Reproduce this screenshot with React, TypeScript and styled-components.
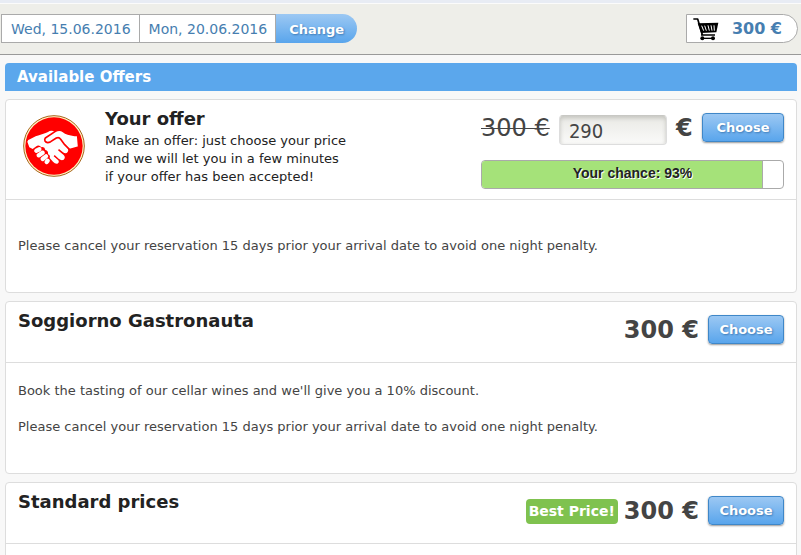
import React from "react";
import styled, { createGlobalStyle } from "styled-components";

const GlobalStyle = createGlobalStyle`
  * { box-sizing: border-box; }
  body {
    margin: 0;
    background: #f8f8f8;
    color: #444;
    font-family: "DejaVu Sans", Verdana, sans-serif;
    font-size: 13px;
    line-height: 18px;
  }
  h1, h2, p { margin: 0; }
  button, input { font-family: inherit; }
`;

const Page = styled.div`
  min-height: 100vh;
`;

const TopBar = styled.header`
  display: flex;
  justify-content: space-between;
  align-items: flex-start;
  padding: 10px 3px 11px 1px;
  background: #eeeee9;
  border-bottom: 1px solid #999;
`;

const TopStrip = styled.div`
  height: 4px;
  background: #e8ecf4;
  border-bottom: 1px solid #fbfbfb;
`;

const DateGroup = styled.div`
  display: flex;
`;

const DateButton = styled.button`
  height: 29px;
  padding: 0 8px 0 9px;
  border: 1px solid #aaa;
  background: #fff;
  color: #467eb0;
  font-size: 14px;
  line-height: 26px;
  & + & { border-left: 0; }
`;

const ChangeButton = styled.button`
  height: 29px;
  padding: 2px 13px 0;
  border: 0;
  border-radius: 0 15px 15px 0;
  background: linear-gradient(#9cc8f3, #59a5ec);
  color: #fff;
  font-size: 13px;
  font-weight: bold;
  text-shadow: 1px 1px 2px #3b78b4;
`;

const Cart = styled.a`
  display: flex;
  align-items: center;
  justify-content: space-between;
  width: 112px;
  height: 29px;
  padding: 0 15px 0 6px;
  border: 1px solid #aaa;
  border-radius: 0 15px 15px 0;
  background: #fff;
  color: #467eb0;
  font-size: 16px;
  font-weight: bold;
  text-decoration: none;
`;

const Main = styled.main`
  display: flex;
  flex-direction: column;
  gap: 8px;
  padding: 8px 4px 8px 5px;
`;

const Banner = styled.h1`
  padding: 0 12px;
  border-radius: 4px 4px 0 0;
  background: #5ba7ec;
  color: #fff;
  font-size: 15px;
  line-height: 28px;
`;

const Card = styled.section`
  border: 1px solid #ddd;
  border-radius: 4px;
  background: #fff;
`;

const CardHead = styled.div<{ $tall?: boolean }>`
  display: flex;
  justify-content: space-between;
  min-height: ${(p) => (p.$tall ? 100 : 61)}px;
  padding: ${(p) => (p.$tall ? "7px 12px 0 17px" : "7px 12px 0")};
  border-bottom: 1px solid #ddd;
`;

const CardBody = styled.div<{ $spacious?: boolean }>`
  display: flex;
  flex-direction: column;
  gap: 18px;
  padding: ${(p) => (p.$spacious ? 37 : 19)}px 12px 37px;
`;

const Title = styled.h2`
  color: #222;
  font-size: 18px;
  line-height: 24px;
`;

const Intro = styled.div`
  display: flex;
  gap: 20px;
  color: #222;
  svg { margin-top: 8px; }
`;

const IntroText = styled.p`
  width: 245px;
  padding-top: 1px;
`;

const Bidding = styled.div`
  display: flex;
  flex-direction: column;
  gap: 16px;
  width: 303px;
  padding-top: 6px;
`;

const Row = styled.div`
  display: flex;
  justify-content: space-between;
  height: 31px;
`;

const Actions = styled.div`
  display: flex;
  align-items: flex-start;
  gap: 9px;
  padding-top: 6px;
`;

const Price = styled.strong`
  font-size: 24px;
  line-height: 30px;
`;

const OldPrice = styled.s`
  font-size: 24px;
  line-height: 30px;
  text-decoration-thickness: 1px;
`;

const BidInput = styled.input`
  width: 108px;
  height: 30px;
  margin-top: 2px;
  padding: 2px 9px 0;
  border: 1px solid #ddd;
  border-top-color: #c8c8c4;
  border-radius: 4px;
  background: linear-gradient(#e9e9e5, #fafaf9);
  box-shadow: inset 0 2px 4px #c4c4be;
  color: #444;
  font-family: "DejaVu Sans Condensed", "Noto Sans", sans-serif;
  font-size: 20px;
`;

const ChooseButton = styled.button<{ $wide?: boolean }>`
  width: ${(p) => (p.$wide ? 82 : 76)}px;
  height: 29px;
  padding: 0;
  border: 1px solid #3f87c8;
  border-radius: 4px;
  background: linear-gradient(#9cc8f3, #59a5ec);
  box-shadow: 0 1px 2px #999;
  color: #fff;
  font-size: 13px;
  font-weight: bold;
  text-shadow: 1px 1px 2px #3b78b4;
`;

const Chance = styled.div`
  display: grid;
  height: 29px;
  border: 1px solid #aaa;
  border-radius: 4px;
  overflow: hidden;
  > * { grid-area: 1 / 1; }
`;

const ChanceFill = styled.div`
  box-sizing: content-box;
  border-right: 1px solid #aaa;
  background: #a5e279;
`;

const ChanceLabel = styled.span`
  color: #222;
  font: bold 14px/24px "Liberation Sans", Arial, sans-serif;
  text-align: center;
  text-shadow: 1px 1px 0 #fff;
`;

const Badge = styled.span`
  margin-top: 3px;
  padding: 0 3px;
  border-radius: 4px;
  background: #7fc24f;
  color: #fff;
  font-size: 14px;
  font-weight: bold;
  line-height: 25px;
`;

const PriceGroup = styled.div`
  display: flex;
  align-items: flex-start;
  gap: 6px;
`;

function Handshake() {
  return (
    <svg width="62" height="62" viewBox="24 30 186 186" aria-hidden="true">
      <circle cx="117" cy="123" r="91" fill="#fff3c4" stroke="#a8641c" strokeWidth="3" />
      <circle cx="117" cy="123" r="86" fill="#f00" />
      <path
        fill="#fff"
        d="M37 110 Q38 104 46 102 L62 94 L72 91 Q96 83 104 78 Q112 75 119 80 L127 86 L150 121 Q164 132 158 141 Q153 148 144 142 L132 132 L129 136 L146 150 Q153 158 146 164 Q139 168 131 161 L119 150 L116 154 L130 166 Q134 173 127 176 Q120 177 114 170 L104 159 Q107 151 99 148 Q101 137 91 135 Q89 124 79 127 Q72 117 62 125 L53 132 L43 127 Z"
      />
      <path
        fill="#fff"
        stroke="#f00"
        strokeWidth="5"
        strokeLinejoin="round"
        d="M91 99 L121 79 Q134 72 145 80 Q156 89 179 91 L188 91 L191 126 L164 134 L149 119 L137 103 Q132 95 124 99 L107 110 Q95 116 90 108 Q88 103 91 99 Z"
      />
      <g stroke="#fff" strokeWidth="13" strokeLinecap="round">
        <path d="M64 137 L73 133" />
        <path d="M71 151 L83 143" />
        <path d="M83 162 L93 154" />
        <path d="M95 171 L98 167" />
      </g>
    </svg>
  );
}

function CartIcon() {
  return (
    <svg width="26" height="24" viewBox="0 0 78 72" aria-hidden="true">
      <path
        d="M1 6 H14 L28 53 M24 54 H66"
        fill="none"
        stroke="#000"
        strokeWidth="5"
        strokeLinejoin="round"
      />
      <path d="M14 19 L76 17 L70 46 L24 48 Z" fill="#000" />
      <path
        d="M26 26 L32 41 M35 26 L40 41 M45 25 L49 41 M54 25 L57 41 M63 25 L64 41"
        stroke="#fff"
        strokeWidth="3"
      />
      <path d="M28 64 H60" stroke="#000" strokeWidth="4" />
      <circle cx="28" cy="64" r="6" />
      <circle cx="60" cy="64" r="6" />
    </svg>
  );
}

const penalty =
  "Please cancel your reservation 15 days prior your arrival date to avoid one night penalty.";

export default function App() {
  const chance = 93;
  return (
    <Page>
      <GlobalStyle />
      <TopStrip />
      <TopBar>
        <DateGroup>
          <DateButton>Wed, 15.06.2016</DateButton>
          <DateButton>Mon, 20.06.2016</DateButton>
          <ChangeButton>Change</ChangeButton>
        </DateGroup>
        <Cart href="#cart">
          <CartIcon />
          300 €
        </Cart>
      </TopBar>
      <Main>
        <Banner>Available Offers</Banner>
        <Card>
          <CardHead $tall>
            <Intro>
              <Handshake />
              <div>
                <Title>Your offer</Title>
                <IntroText>
                  Make an offer: just choose your price and we will let you in a few minutes
                  <br />
                  if your offer has been accepted!
                </IntroText>
              </div>
            </Intro>
            <Bidding>
              <Row>
                <OldPrice>300 €</OldPrice>
                <BidInput aria-label="Your price" defaultValue="290" />
                <Price>€</Price>
                <ChooseButton $wide>Choose</ChooseButton>
              </Row>
              <Chance>
                <ChanceFill style={{ width: `${chance}%` }} />
                <ChanceLabel>Your chance: {chance}%</ChanceLabel>
              </Chance>
            </Bidding>
          </CardHead>
          <CardBody $spacious>
            <p>{penalty}</p>
          </CardBody>
        </Card>
        <Card>
          <CardHead>
            <Title>Soggiorno Gastronauta</Title>
            <Actions>
              <Price>300 €</Price>
              <ChooseButton>Choose</ChooseButton>
            </Actions>
          </CardHead>
          <CardBody>
            <p>Book the tasting of our cellar wines and we'll give you a 10% discount.</p>
            <p>{penalty}</p>
          </CardBody>
        </Card>
        <Card>
          <CardHead>
            <Title>Standard prices</Title>
            <Actions>
              <PriceGroup>
                <Badge>Best Price!</Badge>
                <Price>300 €</Price>
              </PriceGroup>
              <ChooseButton>Choose</ChooseButton>
            </Actions>
          </CardHead>
          <CardBody />
        </Card>
      </Main>
    </Page>
  );
}
